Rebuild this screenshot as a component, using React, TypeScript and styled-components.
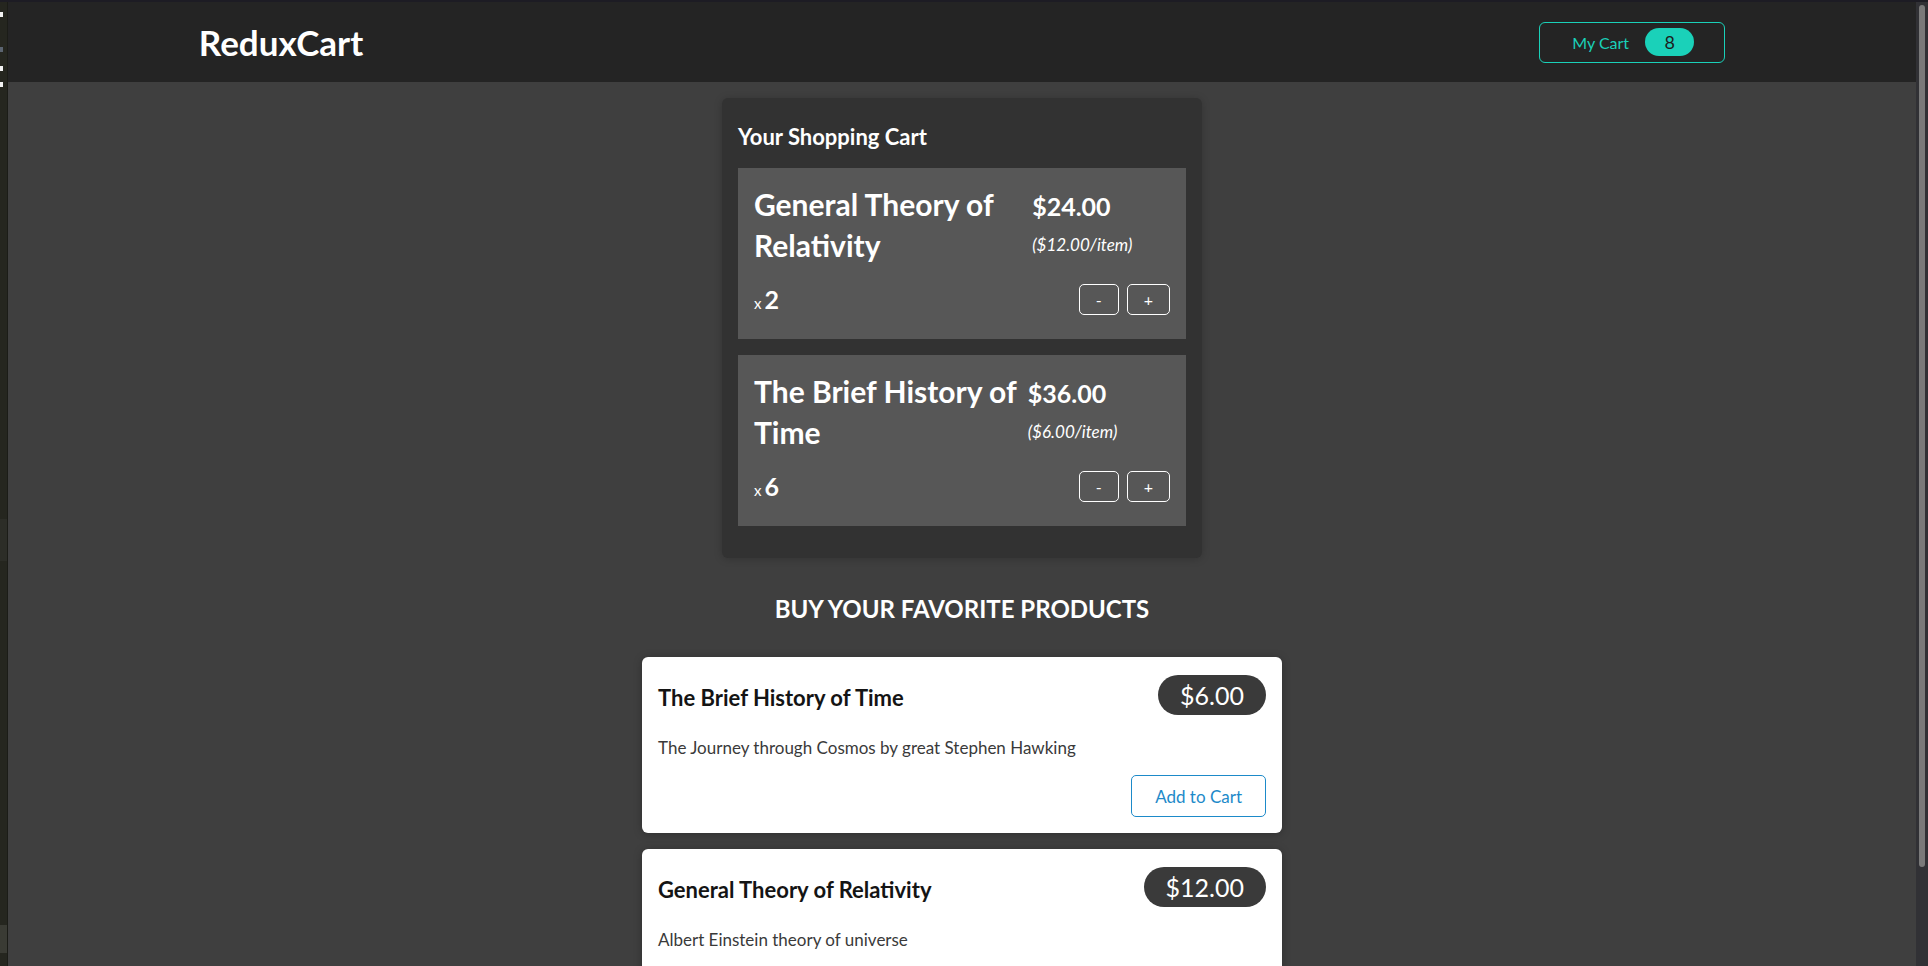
import React from "react";
import styled, { createGlobalStyle } from "styled-components";

const GlobalStyle = createGlobalStyle`
  * { box-sizing: border-box; }
  html, body { margin: 0; padding: 0; height: 100%; overflow: hidden; }
  body {
    font-family: Lato, "Noto Sans", sans-serif;
    background: #3f3f3f;
  }
`;

const Frame = styled.div`
  display: flex;
  height: 100vh;
  border-top: 2px solid #1d1c24;
`;

const EditorStrip = styled.div`
  flex: none;
  width: 8px;
  display: flex;
  flex-direction: column;
  background: #25261f;
  border-right: 1px solid #1b1c17;
`;

const Marker = styled.span<{ $mt: number; $color?: string }>`
  display: block;
  width: 3px;
  height: 5px;
  margin-top: ${(p) => p.$mt}px;
  background: ${(p) => p.$color ?? "#f2f2f2"};
`;

const StripBand = styled.span<{ $mt: number; $h: number; $color: string }>`
  display: block;
  height: ${(p) => p.$h}px;
  margin-top: ${(p) => p.$mt}px;
  background: ${(p) => p.$color};
`;

const Viewport = styled.div`
  flex: 1;
  overflow: hidden;
  background: #3f3f3f;
`;

const ScrollTrack = styled.div`
  flex: none;
  width: 12px;
  padding: 3px 3px 0;
  background: #313135;
`;

const ScrollThumb = styled.div`
  width: 6px;
  height: 862px;
  border-radius: 3px;
  background: #7a7a7a;
`;

const Header = styled.header`
  height: 80px;
  padding: 0 10%;
  display: flex;
  justify-content: space-between;
  align-items: center;
  background: #242424;
`;

const Logo = styled.h1`
  margin: 0;
  color: #ffffff;
  font-size: 35px;
  font-weight: 700;
`;

const CartButton = styled.button`
  width: 186px;
  height: 41px;
  display: flex;
  align-items: center;
  justify-content: center;
  gap: 16px;
  padding: 0 0 0 2px;
  background: transparent;
  border: 1px solid #1ad1b9;
  border-radius: 6px;
  color: #1ad1b9;
  font-family: inherit;
  font-size: 16px;
  cursor: pointer;
`;

const Badge = styled.span`
  width: 49px;
  height: 28px;
  display: inline-flex;
  align-items: center;
  justify-content: center;
  border-radius: 30px;
  background: #1ad1b9;
  color: #1d1d1d;
  font-size: 18px;
`;

const Main = styled.main`
  padding-bottom: 24px;
`;

const CartPanel = styled.section`
  max-width: 480px;
  margin: 16px auto;
  padding: 16px;
  border-radius: 6px;
  background: #323232;
  color: #ffffff;
  box-shadow: 0 1px 8px rgba(0, 0, 0, 0.2);
`;

const CartHeading = styled.h2`
  margin: 8px 0;
  font-size: 22px;
  line-height: 30px;
  font-weight: 700;
`;

const List = styled.ul`
  list-style: none;
  margin: 0;
  padding: 0;
`;

const CartItemBox = styled.li`
  margin: 16px 0;
  padding: 16px;
  background: #575757;
`;

const ItemHeader = styled.header`
  display: flex;
`;

const ItemTitle = styled.h3`
  margin: 0 0 9px;
  font-size: 30px;
  line-height: 41px;
  font-weight: 700;
`;

const ItemTotal = styled.div`
  font-size: 25px;
  line-height: 35px;
  font-weight: 700;
  padding-top: 5px;
`;

const ItemUnitPrice = styled.span`
  font-size: 17px;
  font-weight: 400;
  font-style: italic;
`;

const Details = styled.div`
  display: flex;
  justify-content: space-between;
  align-items: center;
`;

const Quantity = styled.div`
  font-size: 15px;
`;

const QuantityValue = styled.span`
  margin-left: 3px;
  font-size: 25px;
  font-weight: 700;
`;

const Actions = styled.div`
  display: flex;
  justify-content: flex-end;
  margin: 9px 0 8px;
`;

const QtyButton = styled.button`
  height: 31px;
  margin-left: 8px;
  padding: 0 16px;
  background: transparent;
  border: 1px solid #ffffff;
  border-radius: 5px;
  color: #ffffff;
  font-family: inherit;
  font-size: 16px;
  cursor: pointer;
`;

const Products = styled.section`
  max-width: 640px;
  margin: 0 auto;
`;

const ProductsHeading = styled.h2`
  margin: 34px auto 32px;
  text-align: center;
  text-transform: uppercase;
  color: #ffffff;
  font-size: 24px;
  line-height: 33px;
  font-weight: 700;
`;

const ProductCard = styled.li`
  margin: 16px auto;
  padding: 16px;
  border-radius: 6px;
  background: #ffffff;
  box-shadow: 0 1px 8px rgba(0, 0, 0, 0.25);
`;

const ProductHeader = styled.header`
  display: flex;
  justify-content: space-between;
  align-items: center;
`;

const ProductTitle = styled.h3`
  margin: 8px 0;
  padding-top: 5px;
  font-size: 22px;
  line-height: 23px;
  font-weight: 700;
  color: #141414;
`;

const PricePill = styled.div`
  padding: 2px 22px;
  border-radius: 30px;
  background: #3a3a3a;
  color: #ffffff;
  font-size: 25px;
  line-height: 36px;
`;

const Description = styled.p`
  margin: 18px 0 14px;
  color: #3a3a3a;
  font-size: 17px;
  line-height: 26px;
`;

const ProductActions = styled.div`
  display: flex;
  justify-content: flex-end;
`;

const AddButton = styled.button`
  height: 42px;
  padding: 0 23px;
  background: transparent;
  border: 1px solid #1d8ac9;
  border-radius: 5px;
  color: #1d8ac9;
  font-family: inherit;
  font-size: 17px;
  cursor: pointer;
`;

type CartLine = { title: string; quantity: number; price: number };
type Product = { title: string; price: number; description: string };

const cartItems: CartLine[] = [
  { title: "General Theory of Relativity", quantity: 2, price: 12 },
  { title: "The Brief History of Time", quantity: 6, price: 6 },
];

const products: Product[] = [
  {
    title: "The Brief History of Time",
    price: 6,
    description: "The Journey through Cosmos by great Stephen Hawking",
  },
  {
    title: "General Theory of Relativity",
    price: 12,
    description: "Albert Einstein theory of universe",
  },
];

const money = (n: number) => `$${n.toFixed(2)}`;

export default function App() {
  const total = cartItems.reduce((s, i) => s + i.quantity, 0);
  return (
    <>
      <GlobalStyle />
      <Frame>
        <EditorStrip>
          <Marker $mt={10} />
          <Marker $mt={30} $color="#5b6470" />
          <Marker $mt={14} />
          <Marker $mt={11} />
          <StripBand $mt={432} $h={42} $color="#2c2d27" />
          <StripBand $mt={364} $h={28} $color="#3a3b34" />
        </EditorStrip>
        <Viewport>
          <Header>
            <Logo>ReduxCart</Logo>
            <CartButton>
              <span>My Cart</span>
              <Badge>{total}</Badge>
            </CartButton>
          </Header>
          <Main>
            <CartPanel>
              <CartHeading>Your Shopping Cart</CartHeading>
              <List>
                {cartItems.map((item) => (
                  <CartItemBox key={item.title}>
                    <ItemHeader>
                      <ItemTitle>{item.title}</ItemTitle>
                      <ItemTotal>
                        {money(item.price * item.quantity)}{" "}
                        <ItemUnitPrice>({money(item.price)}/item)</ItemUnitPrice>
                      </ItemTotal>
                    </ItemHeader>
                    <Details>
                      <Quantity>
                        x<QuantityValue>{item.quantity}</QuantityValue>
                      </Quantity>
                      <Actions>
                        <QtyButton>-</QtyButton>
                        <QtyButton>+</QtyButton>
                      </Actions>
                    </Details>
                  </CartItemBox>
                ))}
              </List>
            </CartPanel>
            <Products>
              <ProductsHeading>Buy your favorite products</ProductsHeading>
              <List>
                {products.map((p) => (
                  <ProductCard key={p.title}>
                    <ProductHeader>
                      <ProductTitle>{p.title}</ProductTitle>
                      <PricePill>{money(p.price)}</PricePill>
                    </ProductHeader>
                    <Description>{p.description}</Description>
                    <ProductActions>
                      <AddButton>Add to Cart</AddButton>
                    </ProductActions>
                  </ProductCard>
                ))}
              </List>
            </Products>
          </Main>
        </Viewport>
        <ScrollTrack>
          <ScrollThumb />
        </ScrollTrack>
      </Frame>
    </>
  );
}
